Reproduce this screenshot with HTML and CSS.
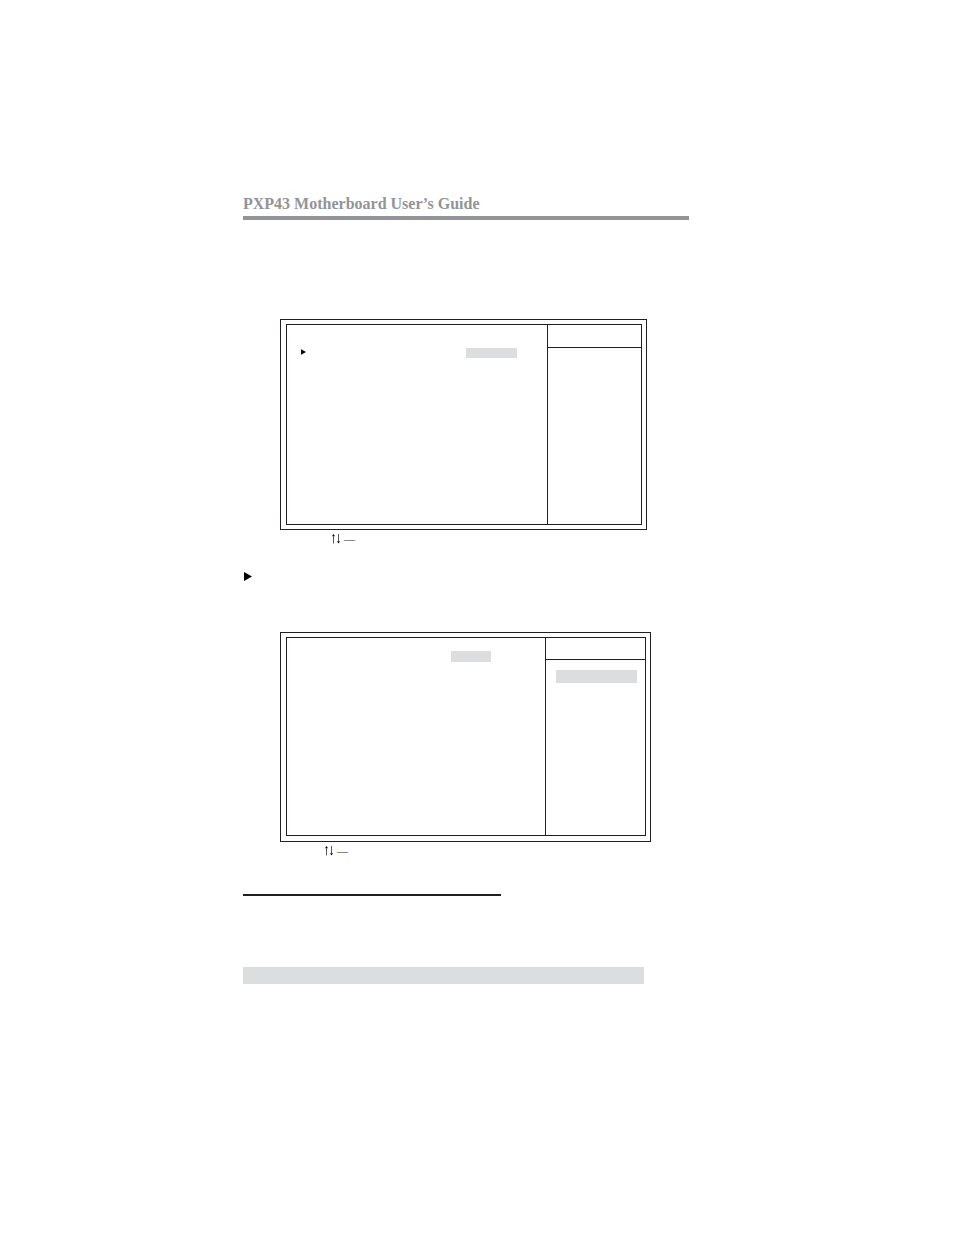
FILE: index.html
```
<!DOCTYPE html>
<html lang="en">
<head>
  <meta charset="UTF-8" />
  <meta name="viewport" content="width=device-width, initial-scale=1.0"/>
  <title>PXP43 Motherboard User’s Guide</title>

  <link rel="stylesheet" href="styles.css">
</head>
<body>

  <header>
    <h1>PXP43 Motherboard User’s Guide</h1>
  </header>

  <main>
    <section class="screen">
      <div class="frame">
        <div class="settings">
          <svg class="marker" viewBox="0 0 8 9"><path d="M0 0L8 4.5L0 9Z"/></svg>
          <div class="value"></div>
        </div>
        <div class="help">
          <div class="helpTitle"></div>
        </div>
      </div>
    </section>
    <div class="keys">
      <svg class="arrows" viewBox="0 0 10 10">
        <path class="line" d="M2.5 1V9.5M7.5 0V9"/>
        <path d="M2.5 0L4.2 2.4L2.5 1.8L0.8 2.4ZM7.5 9.5L9.2 7.1L7.5 7.7L5.8 7.1Z"/>
      </svg>
      <span>—</span>
    </div>

    <div class="submenu">
      <svg class="marker" viewBox="0 0 8 9"><path d="M0 0L8 4.5L0 9Z"/></svg>
    </div>

    <section class="screen second">
      <div class="frame">
        <div class="settings">
          <div class="value"></div>
        </div>
        <div class="help">
          <div class="helpTitle"></div>
          <div class="helpValue"></div>
        </div>
      </div>
    </section>
    <div class="keys second">
      <svg class="arrows" viewBox="0 0 10 10">
        <path class="line" d="M2.5 1V9.5M7.5 0V9"/>
        <path d="M2.5 0L4.2 2.4L2.5 1.8L0.8 2.4ZM7.5 9.5L9.2 7.1L7.5 7.7L5.8 7.1Z"/>
      </svg>
      <span>—</span>
    </div>

    <hr>
    <div class="band"></div>
  </main>

</body>
</html>
```

FILE: styles.css
```
* {
  box-sizing: border-box;
}

body {
  margin: 0;
  padding: 194px 265px 251px 243px;
  background-color: white;
  color: #231f20;
  font-family: "Palatino Linotype", Palatino, "Liberation Serif", serif;
}

header {
  border-bottom: 4px solid #929497;
}

h1 {
  margin: 0;
  padding-bottom: 2px;
  color: #929497;
  font-size: 16px;
  line-height: 20px;
  white-space: nowrap;
}

svg {
  display: block;
}

.screen {
  margin: 99px 42px 0 37px;
  padding: 4px 4px 4px 5px;
  border: 1px solid #231f20;
}

.frame {
  display: flex;
  height: 201px;
  border: 1px solid #231f20;
}

.settings {
  display: flex;
  flex: 1;
  justify-content: space-between;
  padding: 23px 30px 0 14px;
}

.settings .marker {
  width: 5px;
  height: 6px;
  margin-top: 1px;
}

.value {
  width: 51px;
  height: 10px;
  background-color: #dcddde;
}

.help {
  width: 94px;
  border-left: 1px solid #231f20;
}

.helpTitle {
  height: 23px;
  border-bottom: 1px solid #231f20;
}

.keys {
  display: flex;
  align-items: center;
  gap: 3px;
  height: 18px;
  padding-left: 88px;
  font-size: 11px;
  font-weight: bold;
  line-height: 12px;
}

.arrows {
  width: 10px;
  height: 10px;
}

.arrows .line {
  stroke: #58595b;
  stroke-width: 1;
}

.submenu {
  padding-top: 24px;
}

.submenu .marker {
  width: 8px;
  height: 9px;
  margin-left: 1px;
}

.screen.second {
  margin: 51px 38px 0 37px;
  padding-bottom: 5px;
}

.second .frame {
  height: 199px;
}

.second .settings {
  justify-content: flex-end;
  padding: 13px 54px 0 0;
}

.second .value {
  width: 40px;
  height: 11px;
}

.second .help {
  width: 100px;
}

.second .helpTitle {
  height: 22px;
}

.helpValue {
  height: 13px;
  margin: 10px 8px 0 10px;
  background-color: #dcddde;
}

.keys.second {
  padding-left: 81px;
}

hr {
  width: 258px;
  height: 2px;
  margin: 34px 0 0;
  border: none;
  background-color: #231f20;
}

.band {
  height: 17px;
  margin: 71px 45px 0 0;
  background-color: #dcddde;
}
```
